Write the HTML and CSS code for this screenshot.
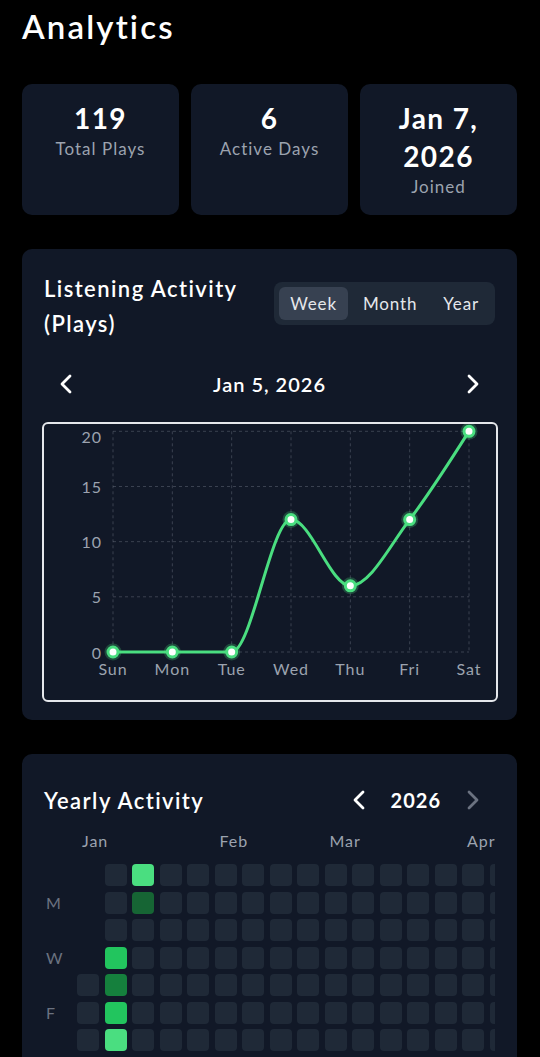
FILE: index.html
```html
<!DOCTYPE html>
<html lang="en">
<head>
    <meta charset="UTF-8">
    <meta name="viewport" content="width=device-width, initial-scale=1.0">
    <title>Analytics</title>
    <link rel="stylesheet" href="styles.css">
</head>
<body>
    <main class="page">
        <h1 class="page-title">Analytics</h1>

        <section class="stats">
            <div class="stat-card">
                <div class="stat-value">119</div>
                <div class="stat-label">Total Plays</div>
            </div>
            <div class="stat-card">
                <div class="stat-value">6</div>
                <div class="stat-label">Active Days</div>
            </div>
            <div class="stat-card">
                <div class="stat-value">Jan 7, 2026</div>
                <div class="stat-label">Joined</div>
            </div>
        </section>

        <section class="card activity-card">
            <div class="card-header">
                <h2 class="card-title">Listening Activity (Plays)</h2>
                <div class="range-tabs">
                    <button class="tab active">Week</button>
                    <button class="tab">Month</button>
                    <button class="tab">Year</button>
                </div>
            </div>

            <div class="period-nav">
                <button class="nav-btn" aria-label="Previous week">
                    <svg width="14" height="20" viewBox="0 0 14 20"><path d="M11 2 L3 10 L11 18" /></svg>
                </button>
                <span class="period-label">Jan 5, 2026</span>
                <button class="nav-btn" aria-label="Next week">
                    <svg width="14" height="20" viewBox="0 0 14 20"><path d="M3 2 L11 10 L3 18" /></svg>
                </button>
            </div>

            <div class="chart-box">
                <svg class="chart" viewBox="0 0 452 276">
                    <!-- grid -->
                    <line class="grid-line" x1="69" y1="7.3" x2="425" y2="7.3" />
                    <line class="grid-line" x1="69" y1="62.5" x2="425" y2="62.5" />
                    <line class="grid-line" x1="69" y1="117.65" x2="425" y2="117.65" />
                    <line class="grid-line" x1="69" y1="172.8" x2="425" y2="172.8" />
                    <line class="grid-line" x1="69" y1="228" x2="425" y2="228" />
                    <line class="grid-line" x1="69" y1="7.3" x2="69" y2="228" />
                    <line class="grid-line" x1="128.33" y1="7.3" x2="128.33" y2="228" />
                    <line class="grid-line" x1="187.67" y1="7.3" x2="187.67" y2="228" />
                    <line class="grid-line" x1="247" y1="7.3" x2="247" y2="228" />
                    <line class="grid-line" x1="306.33" y1="7.3" x2="306.33" y2="228" />
                    <line class="grid-line" x1="365.67" y1="7.3" x2="365.67" y2="228" />
                    <line class="grid-line" x1="425" y1="7.3" x2="425" y2="228" />

                    <!-- y axis -->
                    <text class="tick" x="58" y="12.6" text-anchor="end" dominant-baseline="central">20</text>
                    <text class="tick" x="58" y="62.5" text-anchor="end" dominant-baseline="central">15</text>
                    <text class="tick" x="58" y="117.65" text-anchor="end" dominant-baseline="central">10</text>
                    <text class="tick" x="58" y="172.8" text-anchor="end" dominant-baseline="central">5</text>
                    <text class="tick" x="58" y="228" text-anchor="end" dominant-baseline="central">0</text>

                    <!-- plays line -->
                    <path class="line" d="M69,228 L128.33,228 L187.67,228 C207.45,228 227.22,95.58 247,95.58 C266.78,95.58 286.56,161.79 306.33,161.79 C326.11,161.79 345.89,121.33 365.67,95.58 C385.44,69.84 405.22,38.56 425,7.3" />

                    <circle class="dot-glow" cx="69" cy="228" r="8.5" />
                    <circle class="dot-glow" cx="128.33" cy="228" r="8.5" />
                    <circle class="dot-glow" cx="187.67" cy="228" r="8.5" />
                    <circle class="dot-glow" cx="247" cy="95.58" r="8.5" />
                    <circle class="dot-glow" cx="306.33" cy="161.79" r="8.5" />
                    <circle class="dot-glow" cx="365.67" cy="95.58" r="8.5" />
                    <circle class="dot-glow" cx="425" cy="7.3" r="8.5" />
                    <circle class="dot" cx="69" cy="228" r="5" />
                    <circle class="dot" cx="128.33" cy="228" r="5" />
                    <circle class="dot" cx="187.67" cy="228" r="5" />
                    <circle class="dot" cx="247" cy="95.58" r="5" />
                    <circle class="dot" cx="306.33" cy="161.79" r="5" />
                    <circle class="dot" cx="365.67" cy="95.58" r="5" />
                    <circle class="dot" cx="425" cy="7.3" r="5" />

                    <!-- x axis -->
                    <text class="tick" x="69" y="251" text-anchor="middle">Sun</text>
                    <text class="tick" x="128.33" y="251" text-anchor="middle">Mon</text>
                    <text class="tick" x="187.67" y="251" text-anchor="middle">Tue</text>
                    <text class="tick" x="247" y="251" text-anchor="middle">Wed</text>
                    <text class="tick" x="306.33" y="251" text-anchor="middle">Thu</text>
                    <text class="tick" x="365.67" y="251" text-anchor="middle">Fri</text>
                    <text class="tick" x="425" y="251" text-anchor="middle">Sat</text>
                </svg>
            </div>
        </section>

        <section class="card yearly-card">
            <div class="card-header">
                <h2 class="card-title">Yearly Activity</h2>
                <div class="year-nav">
                    <button class="nav-btn" aria-label="Previous year">
                        <svg width="14" height="20" viewBox="0 0 14 20"><path d="M11 2 L3 10 L11 18" /></svg>
                    </button>
                    <span class="year-label">2026</span>
                    <button class="nav-btn disabled" aria-label="Next year">
                        <svg width="14" height="20" viewBox="0 0 14 20"><path d="M3 2 L11 10 L3 18" /></svg>
                    </button>
                </div>
            </div>

            <div class="heatmap">
                <div class="day-labels">
                    <span></span><span>M</span><span></span><span>W</span><span></span><span>F</span><span></span>
                </div>
                <div class="heatmap-scroll">
                    <div class="months" id="months"></div>
                    <div class="weeks" id="weeks"></div>
                </div>
            </div>
        </section>
    </main>

    <script>
        // plays level per day (1 = few, 4 = most)
        const levels = {
            '2026-01-07': 3,
            '2026-01-08': 2,
            '2026-01-09': 3,
            '2026-01-10': 4,
            '2026-01-11': 4,
            '2026-01-12': 1
        };
        const monthNames = ['Jan', 'Feb', 'Mar', 'Apr', 'May', 'Jun', 'Jul', 'Aug', 'Sep', 'Oct', 'Nov', 'Dec'];
        const year = 2026;

        const weeksEl = document.getElementById('weeks');
        const monthsEl = document.getElementById('months');

        const start = new Date(year, 0, 1);
        start.setDate(1 - start.getDay());

        let lastMonth = -1;
        for (let w = 0; w < 53; w++) {
            let firstInYear = null;
            for (let d = 0; d < 7; d++) {
                const day = new Date(start.getFullYear(), start.getMonth(), start.getDate() + w * 7 + d);
                const cell = document.createElement('div');
                cell.className = 'cell';
                if (day.getFullYear() !== year) {
                    cell.classList.add('blank');
                } else {
                    if (!firstInYear) firstInYear = day;
                    const key = year + '-' + String(day.getMonth() + 1).padStart(2, '0') + '-' + String(day.getDate()).padStart(2, '0');
                    if (levels[key]) cell.classList.add('l' + levels[key]);
                }
                weeksEl.appendChild(cell);
            }
            if (firstInYear && firstInYear.getMonth() !== lastMonth) {
                lastMonth = firstInYear.getMonth();
                const label = document.createElement('span');
                label.className = 'month';
                label.textContent = monthNames[lastMonth];
                label.style.gridColumn = (w + 1) + ' / span 3';
                monthsEl.appendChild(label);
            }
        }
    </script>
</body>
</html>
```

FILE: styles.css
```css
body {
    margin: 0;
    background: #000;
    color: #f3f4f6;
    font-family: Lato, "Noto Sans", sans-serif;
}
button {
    font: inherit;
    cursor: pointer;
}
.page {
    padding: 0 23px 40px 22px;
}
.page-title {
    margin: 0;
    font-size: 33px;
    font-weight: 600;
    line-height: 52px;
    letter-spacing: 0.065em;
    color: #fff;
}

/* stat cards */
.stats {
    display: grid;
    grid-template-columns: repeat(3, 1fr);
    gap: 12px;
    margin-top: 32px;
}
.stat-card {
    background: #111827;
    border-radius: 10px;
    padding: 15px 10px 16px;
    text-align: center;
}
.stat-value {
    font-size: 28px;
    font-weight: 700;
    line-height: 38px;
    letter-spacing: 0.05em;
    color: #fff;
}
.stat-label {
    font-size: 17px;
    line-height: 24px;
    letter-spacing: 0.06em;
    color: #9ca3af;
}

/* cards */
.card {
    margin-top: 34px;
    padding: 22px;
    background: #111827;
    border-radius: 10px;
}
.activity-card {
    padding-bottom: 18px;
}
.card-header {
    display: flex;
    align-items: center;
    justify-content: space-between;
    gap: 12px;
}
.card-title {
    margin: 0;
    font-size: 22px;
    font-weight: 600;
    line-height: 35px;
    letter-spacing: 0.065em;
    color: #fff;
}
.activity-card .range-tabs {
    margin-top: -5px;
}
.range-tabs {
    display: flex;
    gap: 4px;
    padding: 5px;
    background: #1f2937;
    border-radius: 8px;
    flex: none;
}
.tab {
    padding: 6px 11px;
    border: 0;
    border-radius: 6px;
    background: none;
    font-size: 17px;
    line-height: 21px;
    letter-spacing: 0.05em;
    color: #e5e7eb;
}
.tab.active {
    background: #374151;
}

.nav-btn {
    width: 44px;
    height: 48px;
    padding: 0;
    border: 0;
    background: none;
    color: #fff;
    display: flex;
    align-items: center;
    justify-content: center;
}
.nav-btn svg path {
    fill: none;
    stroke: currentColor;
    stroke-width: 2.8;
    stroke-linecap: round;
    stroke-linejoin: round;
}
.nav-btn.disabled {
    color: #6b7280;
}
.period-nav {
    display: flex;
    align-items: center;
    justify-content: space-between;
    margin-top: 19px;
}
.period-label {
    font-size: 20px;
    font-weight: 600;
    letter-spacing: 0.05em;
    color: #fff;
}

/* line chart */
.chart-box {
    margin: 14px -3px 0 -2px;
    height: 280px;
    border: 2px solid #e5e7eb;
    border-radius: 6px;
    box-sizing: border-box;
}
.chart {
    display: block;
    width: 100%;
    height: 100%;
}
.grid-line {
    stroke: rgba(156, 163, 175, 0.3);
    stroke-width: 1;
    stroke-dasharray: 3 3;
}
.tick {
    fill: #9ca3af;
    font-size: 16px;
    letter-spacing: 0.06em;
}
.line {
    fill: none;
    stroke: #4ade80;
    stroke-width: 3;
}
.dot {
    fill: #fff;
    stroke: #4ade80;
    stroke-width: 3;
}
.dot-glow {
    fill: #4ade80;
    opacity: 0.25;
}

/* yearly heatmap */
.year-nav {
    display: flex;
    align-items: center;
    gap: 10px;
}
.year-label {
    font-size: 20px;
    font-weight: 700;
    letter-spacing: 0.05em;
    color: #fff;
}
.heatmap {
    display: flex;
    margin-top: 6px;
}
.day-labels {
    flex: none;
    width: 33px;
    box-sizing: border-box;
    padding: 34px 0 0 2px;
    display: grid;
    grid-template-rows: repeat(7, 22px);
    row-gap: 5.5px;
    font-size: 16px;
    line-height: 22px;
    color: #6b7280;
}
.heatmap-scroll {
    flex: 1;
    min-width: 0;
    overflow: hidden;
}
.months {
    display: grid;
    grid-auto-columns: 22px;
    column-gap: 5.5px;
    height: 22px;
    margin-bottom: 12px;
    font-size: 16px;
    line-height: 22px;
    letter-spacing: 0.06em;
    color: #9ca3af;
}
.month {
    grid-row: 1;
    padding-left: 5px;
    white-space: nowrap;
}
.weeks {
    display: grid;
    grid-template-rows: repeat(7, 22px);
    grid-auto-flow: column;
    grid-auto-columns: 22px;
    gap: 5.5px;
}
.cell {
    border-radius: 4px;
    background: #1f2937;
}
.cell.blank {
    background: transparent;
}
.cell.l1 { background: #166534; }
.cell.l2 { background: #15803d; }
.cell.l3 { background: #22c55e; }
.cell.l4 { background: #4ade80; }
```
